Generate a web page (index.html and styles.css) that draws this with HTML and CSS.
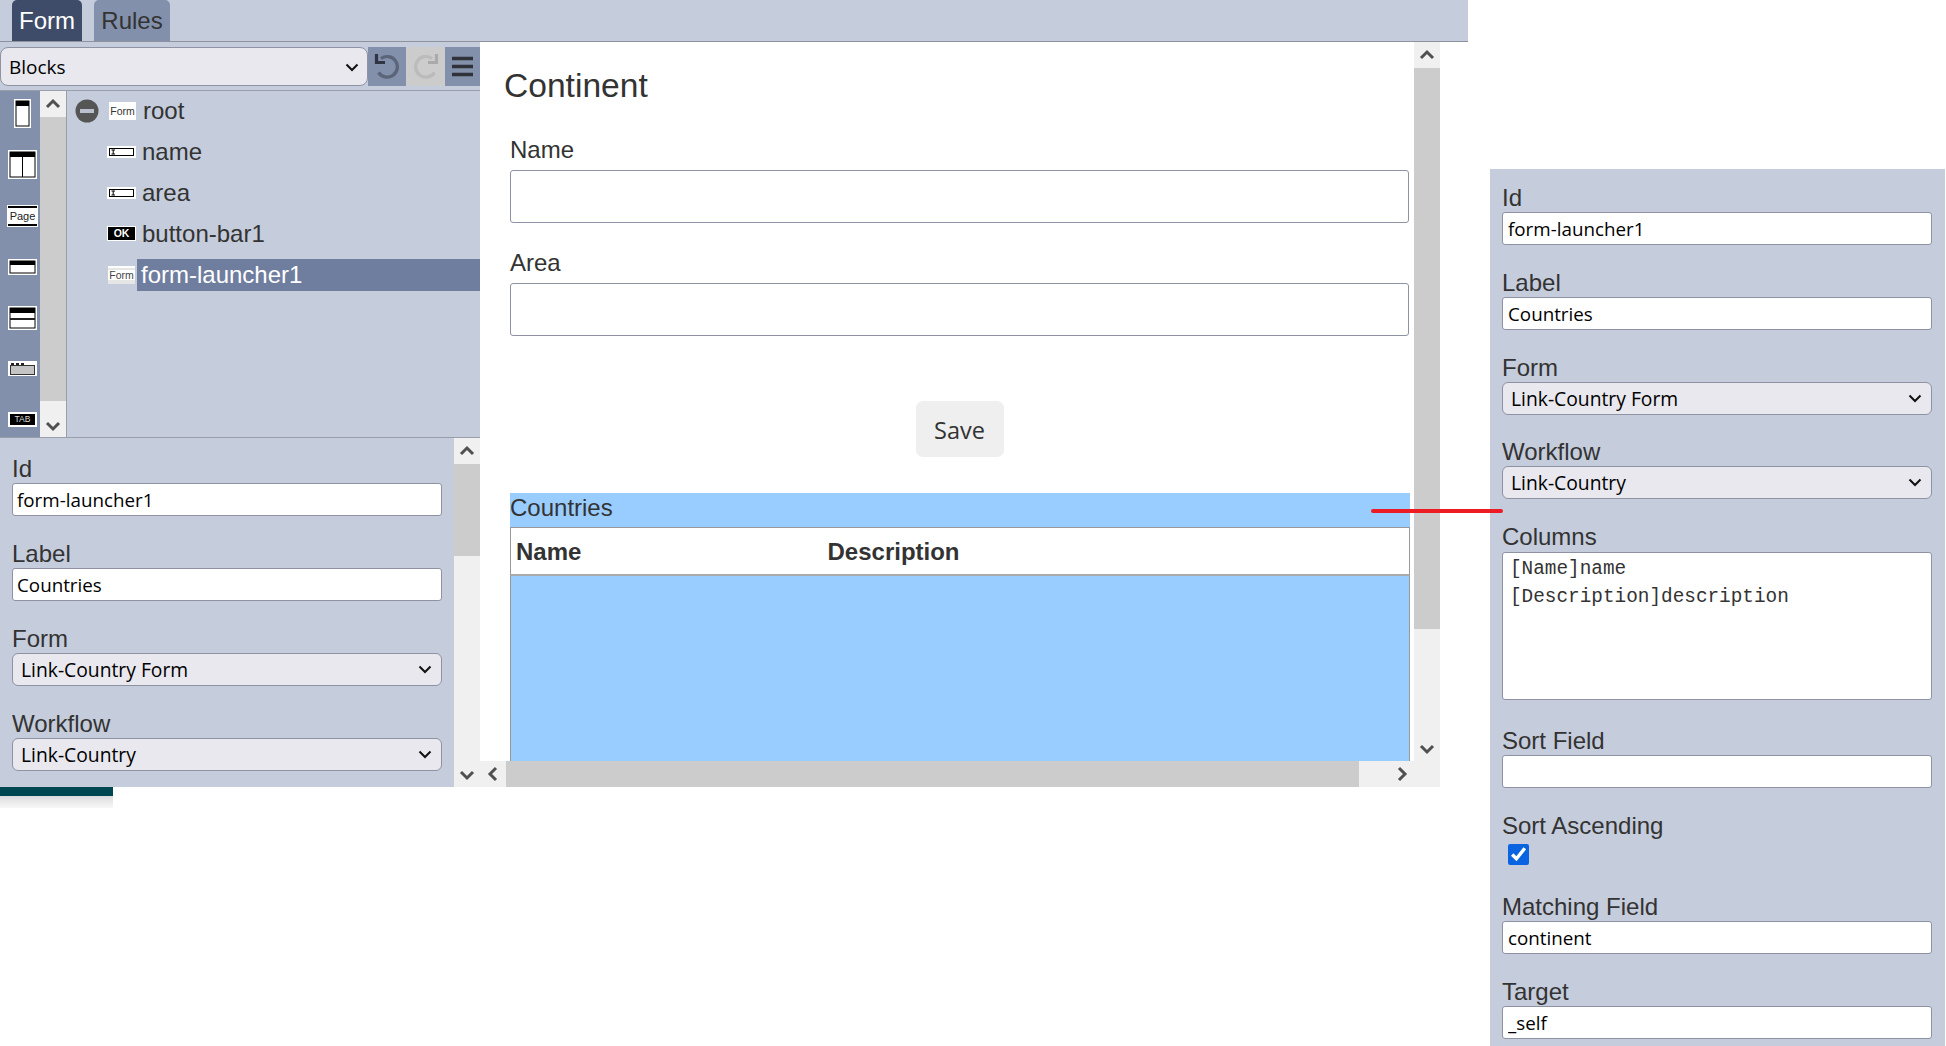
FILE: index.html
```html
<!DOCTYPE html>
<html lang="en">
<head>
<meta charset="utf-8">
<title>Form editor</title>
<link rel="stylesheet" href="styles.css">
</head>
<body>
<div class="page">
  <div class="editor">
    <header class="tabs">
      <div class="tab tab-active">Form</div>
      <div class="tab">Rules</div>
    </header>
    <div class="workspace">
      <aside class="left">
        <div class="toolbar">
          <span class="sel sel-blocks">
            <select class="select blocks"><option>Blocks</option></select>
            <svg class="chev" width="14" height="9" viewBox="0 0 14 9"><path d="M1.500 1.500L7 7L12.500 1.500" fill="none" stroke="#111" stroke-width="2"/></svg>
          </span>
          <div class="tool tool-on">
            <svg width="38" height="39" viewBox="0 0 38 39"><path d="M13 11.5A10.3 10.3 0 1 1 10.5 25.5" fill="none" stroke="#5b6479" stroke-width="3.2"/><path d="M8.5 7V15.5H17" fill="none" stroke="#2f3542" stroke-width="3.2"/></svg>
          </div>
          <div class="tool tool-off">
            <svg width="39" height="39" viewBox="0 0 39 39"><path d="M26 11.5A10.3 10.3 0 1 0 28.5 25.5" fill="none" stroke="#bbb" stroke-width="3.2"/><path d="M30.5 7V15.5H22" fill="none" stroke="#aaa" stroke-width="3.2"/></svg>
          </div>
          <div class="tool tool-on tool-menu">
            <svg width="35" height="39" viewBox="0 0 35 39"><path d="M7 11.5H28M7 19.5H28M7 27.5H28" stroke="#2f3238" stroke-width="3.4"/></svg>
          </div>
        </div>
        <div class="tree-area">
          <nav class="palette">
            <svg class="pal pal-1" width="17" height="29" viewBox="0 0 17 29"><rect x="0" y="0" width="17" height="29" fill="#fff"/><rect x="2" y="2" width="13" height="25" fill="#fff" stroke="#000"/><rect x="2" y="2" width="13" height="5" fill="#000"/></svg>
            <svg class="pal pal-2" width="29" height="29" viewBox="0 0 29 29"><rect width="29" height="29" fill="#fff"/><rect x="2" y="2" width="25" height="25" fill="#fff" stroke="#000"/><rect x="2" y="2" width="25" height="5" fill="#000"/><path d="M14.5 7V27" stroke="#000"/></svg>
            <div class="pal pal-3">Page</div>
            <svg class="pal pal-4" width="29" height="16" viewBox="0 0 29 16"><rect width="29" height="16" fill="#fff"/><rect x="2" y="2" width="25" height="12" fill="#fff" stroke="#000"/><rect x="2" y="2" width="25" height="4" fill="#000"/></svg>
            <svg class="pal pal-5" width="29" height="24" viewBox="0 0 29 24"><rect width="29" height="24" fill="#fff"/><rect x="2" y="2" width="25" height="20" fill="#fff" stroke="#000"/><rect x="2" y="2" width="25" height="5" fill="#000"/><rect x="2" y="12" width="25" height="2" fill="#222"/></svg>
            <svg class="pal pal-6" width="29" height="15" viewBox="0 0 29 15"><rect width="29" height="15" fill="#fff"/><rect x="2.500" y="4.500" width="24" height="9" fill="#c4c4c4" stroke="#333"/><rect x="3" y="2" width="3" height="2" fill="#222"/><rect x="8" y="2" width="3" height="2" fill="#222"/><rect x="13" y="2" width="3" height="2" fill="#222"/></svg>
            <div class="pal pal-7">TAB</div>
          </nav>
          <div class="vbar pal-bar">
            <div class="sb-btn sb-top"><svg width="16" height="12" viewBox="0 0 16 12"><path d="M2 9L8 3L14 9" fill="none" stroke="#505050" stroke-width="3"/></svg></div>
            <div class="thumb pal-thumb"></div>
            <div class="sb-rest pal-rest"><svg width="16" height="12" viewBox="0 0 16 12"><path d="M2 3L8 9L14 3" fill="none" stroke="#505050" stroke-width="3"/></svg></div>
          </div>
          <ul class="tree">
            <li class="node node-root">
              <svg class="toggle" width="24" height="24" viewBox="0 0 24 24"><circle cx="12" cy="12" r="11.500" fill="#555"/><rect x="5" y="10" width="14" height="4" fill="#b9bfcc"/></svg>
              <span class="ico ico-form">Form</span><span class="lbl">root</span>
            </li>
            <li class="node">
              <svg class="ico-svg" width="29" height="12" viewBox="0 0 29 12"><rect width="29" height="12" fill="#fff"/><rect x="2.500" y="2.500" width="24" height="7" fill="#fff" stroke="#000"/><path d="M4.500 4H8M4.500 8H8M6.200 4V8" stroke="#000"/></svg>
              <span class="lbl">name</span>
            </li>
            <li class="node">
              <svg class="ico-svg" width="29" height="12" viewBox="0 0 29 12"><rect width="29" height="12" fill="#fff"/><rect x="2.500" y="2.500" width="24" height="7" fill="#fff" stroke="#000"/><path d="M4.500 4H8M4.500 8H8M6.200 4V8" stroke="#000"/></svg>
              <span class="lbl">area</span>
            </li>
            <li class="node">
              <span class="ico ico-ok">OK</span><span class="lbl">button-bar1</span>
            </li>
            <li class="node node-sel">
              <span class="ico ico-form ico-form-sel">Form</span><span class="lbl lbl-sel">form-launcher1</span>
            </li>
          </ul>
        </div>
        <div class="props-left">
          <form class="props props-a">
            <label class="flabel">Id</label>
            <input class="input" type="text" value="form-launcher1">
            <label class="flabel">Label</label>
            <input class="input" type="text" value="Countries">
            <label class="flabel">Form</label>
            <span class="sel">
              <select class="select"><option>Link-Country Form</option></select>
              <svg class="chev" width="14" height="9" viewBox="0 0 14 9"><path d="M1.500 1.500L7 7L12.500 1.500" fill="none" stroke="#111" stroke-width="2"/></svg>
            </span>
            <label class="flabel">Workflow</label>
            <span class="sel">
              <select class="select"><option>Link-Country</option></select>
              <svg class="chev" width="14" height="9" viewBox="0 0 14 9"><path d="M1.500 1.500L7 7L12.500 1.500" fill="none" stroke="#111" stroke-width="2"/></svg>
            </span>
          </form>
          <div class="vbar props-bar">
            <div class="sb-btn sb-top"><svg width="16" height="12" viewBox="0 0 16 12"><path d="M2 9L8 3L14 9" fill="none" stroke="#505050" stroke-width="3"/></svg></div>
            <div class="thumb props-thumb"></div>
            <div class="sb-rest props-rest"><svg width="16" height="12" viewBox="0 0 16 12"><path d="M2 3L8 9L14 3" fill="none" stroke="#505050" stroke-width="3"/></svg></div>
          </div>
        </div>
        <div class="teal"></div>
        <div class="teal-shadow"></div>
      </aside>
      <main class="main">
        <div class="canvas">
          <h1 class="title">Continent</h1>
          <div class="mfield mfield-first">
            <label class="mlabel">Name</label>
            <input class="minput" type="text">
          </div>
          <div class="mfield">
            <label class="mlabel">Area</label>
            <input class="minput" type="text">
          </div>
          <div class="actions"><button class="save" type="button">Save</button></div>
          <section class="grid-box">
            <div class="grid-title">Countries</div>
            <div class="grid-head"><div class="col-name">Name</div><div class="col-desc">Description</div></div>
            <div class="grid-body"></div>
          </section>
        </div>
        <div class="vbar main-bar">
          <div class="sb-btn sb-top"><svg width="16" height="12" viewBox="0 0 16 12"><path d="M2 9L8 3L14 9" fill="none" stroke="#505050" stroke-width="3"/></svg></div>
          <div class="thumb main-thumb"></div>
          <div class="sb-rest main-rest"><svg width="16" height="12" viewBox="0 0 16 12"><path d="M2 3L8 9L14 3" fill="none" stroke="#505050" stroke-width="3"/></svg></div>
        </div>
        <div class="hbar">
          <div class="h-btn"><svg width="12" height="16" viewBox="0 0 12 16"><path d="M9 2L3 8L9 14" fill="none" stroke="#505050" stroke-width="3"/></svg></div>
          <div class="h-thumb"></div>
          <div class="h-rest"><svg width="12" height="16" viewBox="0 0 12 16"><path d="M3 2L9 8L3 14" fill="none" stroke="#505050" stroke-width="3"/></svg></div>
        </div>
        <div class="corner"></div>
      </main>
    </div>
  </div>
  <aside class="side">
    <form class="props props-b">
      <label class="flabel">Id</label>
      <input class="input" type="text" value="form-launcher1">
      <label class="flabel">Label</label>
      <input class="input" type="text" value="Countries">
      <label class="flabel">Form</label>
      <span class="sel">
        <select class="select"><option>Link-Country Form</option></select>
        <svg class="chev" width="14" height="9" viewBox="0 0 14 9"><path d="M1.500 1.500L7 7L12.500 1.500" fill="none" stroke="#111" stroke-width="2"/></svg>
      </span>
      <label class="flabel flabel-tight">Workflow</label>
      <span class="sel">
        <select class="select"><option>Link-Country</option></select>
        <svg class="chev" width="14" height="9" viewBox="0 0 14 9"><path d="M1.500 1.500L7 7L12.500 1.500" fill="none" stroke="#111" stroke-width="2"/></svg>
      </span>
      <label class="flabel flabel-tall">Columns</label>
      <textarea class="area" spellcheck="false">[Name]name
[Description]description</textarea>
      <label class="flabel">Sort Field</label>
      <input class="input" type="text">
      <label class="flabel">Sort Ascending</label>
      <input class="check" type="checkbox" checked>
      <label class="flabel">Matching Field</label>
      <input class="input" type="text" value="continent">
      <label class="flabel">Target</label>
      <input class="input" type="text" value="_self">
    </form>
  </aside>
  <div class="connector"></div>
</div>
</body>
</html>
```
FILE: styles.css
```css
* { box-sizing: border-box; }
html, body { margin: 0; padding: 0; background: #fff; }
body { font-family: "Liberation Sans", Arial, sans-serif; color: #333; overflow: hidden; }
.page { position: relative; display: flex; width: 1946px; height: 1046px; overflow: hidden; }

.editor { width: 1468px; flex: none; }
.tabs { height: 42px; background: #c5ccdb; border-bottom: 1px solid #8e929c; display: flex; gap: 12px; padding-left: 12px; }
.tab { height: 41px; width: 76px; background: #8290ab; border-radius: 5px 5px 0 0; color: #333; font-size: 24px; line-height: 42px; text-align: center; }
.tab-active { width: 70px; background: #3e4c69; color: #fff; }

.workspace { display: flex; width: 1440px; }
.left { width: 480px; flex: none; }
.toolbar { height: 48px; background: #c5ccdb; display: flex; padding-top: 5px; }
.sel { position: relative; display: block; width: 430px; height: 33px; margin-bottom: 24px; }
.chev { position: absolute; right: 10px; top: 12px; pointer-events: none; }
.select { display: block; width: 100%; height: 100%; padding: 0 0 0 8px; appearance: none; background-color: #e8e8ee; border: 1px solid #8e92a3; border-radius: 6px; color: #000; font-family: "Open Sans", sans-serif; font-size: 19.3px; }
.sel-blocks { width: 368px; height: 39px; margin: 0; flex: none; }
.sel-blocks .chev { right: 9px; top: 16px; }
.blocks { padding-left: 8px; border-radius: 8px; font-size: 19px; }
.tool { height: 39px; width: 38px; flex: none; }
.tool svg { display: block; }
.tool-on { background: #8290ab; }
.tool-off { width: 39px; background: #ccc; }
.tool-menu { width: 35px; }

.tree-area { height: 348px; display: flex; background: #c5ccdb; border-top: 1px solid #9a9ea8; border-bottom: 1px solid #9a9ea8; }
.palette { width: 40px; flex: none; background: #8290ab; display: flex; flex-direction: column; align-items: center; padding-left: 5px; }
.pal { display: block; flex: none; }
.pal-1 { margin-top: 8px; }
.pal-2 { margin-top: 22px; }
.pal-3 { margin-top: 27px; width: 29px; height: 20px; background: #fff; border-top: 2px solid #000; border-bottom: 2px solid #000; outline: 1px solid #fff; font-size: 11px; line-height: 16px; text-align: center; color: #222; }
.pal-4 { margin-top: 33px; }
.pal-5 { margin-top: 31px; }
.pal-6 { margin-top: 31px; }
.pal-7 { margin-top: 36px; width: 29px; height: 15px; background: #000; border: 2px solid #fff; color: #ddd; font-size: 8.5px; line-height: 11px; text-align: center; }

.vbar { display: flex; flex-direction: column; background: #f0f0f0; flex: none; }
.sb-btn, .sb-rest { display: flex; justify-content: center; }
.sb-btn { align-items: center; }
.sb-rest { flex: 1; align-items: flex-end; }
.thumb { background: #ccc; flex: none; }
.pal-bar { width: 26px; }
.pal-bar .sb-btn { height: 26px; }
.pal-thumb { height: 284px; }
.pal-rest { padding-bottom: 5px; }
.tree { flex: 1; list-style: none; margin: 0; padding: 0; border-left: 1px solid #9a9ea8; }
.node { height: 41px; display: flex; align-items: center; padding-left: 40px; font-size: 24px; }
.node-root { height: 40px; padding-left: 8px; }
.toggle { flex: none; margin-right: 10px; }
.ico { display: block; flex: none; }
.ico-svg { display: block; flex: none; margin-right: 6px; }
.ico-form { width: 27px; height: 18px; background: #fff; color: #333; font-size: 10.5px; line-height: 18px; text-align: center; margin-right: 7px; }
.ico-ok { width: 29px; height: 15px; background: #000; border: 1px solid #fff; color: #fff; font-size: 10.5px; font-weight: bold; line-height: 13px; text-align: center; margin-right: 6px; }
.node-sel { padding-left: 41px; }
.ico-form-sel { background: linear-gradient(#fff 0 2px, #e6e6e6 2px 4px, #fff 4px 14px, #e6e6e6 14px); color: #444; margin-right: 2px; }
.lbl { display: block; white-space: nowrap; }
.lbl-sel { flex: 1; height: 32px; line-height: 31px; background: #6f7e9f; color: #fff; padding-left: 4px; }

.props-left { height: 349px; display: flex; background: #c5ccdb; }
.props { display: block; }
.props-a { flex: 1; padding: 17px 12px 0; overflow: hidden; }
.flabel { display: block; height: 28px; font-size: 24px; line-height: 28px; color: #333; white-space: nowrap; }
.input { display: block; width: 430px; height: 33px; margin: 0 0 24px; padding: 0 4px; background: #fff; border: 1px solid #8e92a3; border-radius: 3px; color: #000; font-family: "Open Sans", sans-serif; font-size: 18.8px; }
.props-bar { width: 26px; }
.props-bar .sb-btn { height: 26px; }
.props-thumb { height: 92px; }
.props-rest { padding-bottom: 6px; }
.teal { width: 113px; height: 9px; background: #004752; }
.teal-shadow { width: 113px; height: 12px; background: linear-gradient(#dcdcdc, #f8f8f8); }

.main { flex: 1; height: 745px; display: grid; grid-template-columns: 934px 26px; grid-template-rows: 719px 26px; background: #fff; }
.canvas { overflow: hidden; padding: 0 0 0 24px; background: #fff; }
.title { margin: 23px 0 0 0; font-size: 33.6px; font-weight: normal; line-height: 42px; color: #333; }
.mfield { width: 899px; margin-left: 6px; }
.mfield-first { margin-top: 22px; }
.mlabel { display: block; height: 41px; font-size: 24px; line-height: 41px; color: #333; }
.minput { display: block; width: 899px; height: 53px; margin: 0 0 19px; background: #fff; border: 1px solid #8e92a3; border-radius: 3px; }
.actions { width: 899px; margin: 65px 0 0 6px; text-align: center; height: 92px; }
.save { width: 88px; height: 56px; padding: 2px 0 0; background: #efefef; border: 0; border-radius: 7px; color: #333; font-family: "Open Sans", sans-serif; font-size: 23.5px; }
.grid-box { width: 900px; margin-left: 6px; }
.grid-title { height: 35px; background: #99ccff; font-size: 24px; line-height: 30px; color: #333; border-bottom: 1px solid #999; }
.grid-head { height: 48px; display: flex; background: #fff; border-left: 1px solid #999; border-right: 1px solid #999; border-bottom: 2px solid #aaa; font-size: 24px; font-weight: bold; line-height: 47px; color: #333; }
.col-name { width: 316.5px; padding-left: 5px; }
.grid-body { height: 300px; background: #99ccff; border-left: 1px solid #999; border-right: 1px solid #999; }
.main-bar { grid-column: 2; grid-row: 1; }
.main-bar .sb-btn { height: 26px; }
.main-thumb { height: 561px; }
.main-rest { padding-bottom: 6px; }
.hbar { grid-column: 1; grid-row: 2; display: flex; background: #f0f0f0; }
.h-btn { width: 26px; display: flex; align-items: center; justify-content: center; }
.h-thumb { width: 853px; background: #ccc; }
.h-rest { flex: 1; display: flex; align-items: center; justify-content: flex-end; padding-right: 6px; }
.corner { grid-column: 2; grid-row: 2; background: #f0f0f0; }

.side { flex: none; width: 455px; height: 877px; margin: 169px 0 0 22px; background: #c5ccdb; overflow: hidden; }
.props-b { padding: 15px 12px 0; }
.props-b .input { padding: 0 5px; }
.flabel-tight { margin-top: -1px; }
.flabel-tall { height: 29px; }
.area { display: block; width: 430px; height: 148px; margin: 0 0 27px; padding: 2px 7px; background: #fff; border: 1px solid #8e92a3; border-radius: 3px; resize: none; color: #333; font-family: "Liberation Mono", monospace; font-size: 19.36px; line-height: 28px; overflow: hidden; }
.check { display: block; width: 21px; height: 21px; margin: 4px 0 28px 6px; accent-color: #0a63e0; }
.connector { position: absolute; left: 1371px; top: 509px; width: 132px; height: 4px; border-radius: 2px; background: #ed1c24; }
```
